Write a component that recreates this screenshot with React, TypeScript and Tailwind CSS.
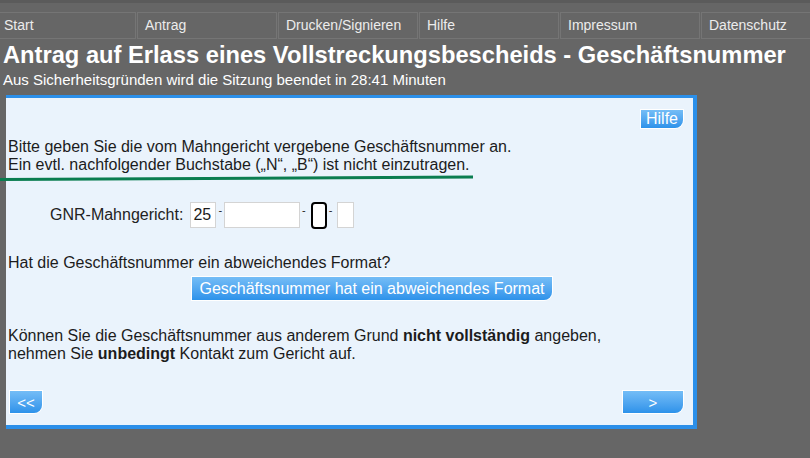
const navItems = ["Start", "Antrag", "Drucken/Signieren", "Hilfe", "Impressum", "Datenschutz"]

function BlueButton({ children, className }: { children: React.ReactNode; className: string }) {
    return (
        <button
            className={
                "flex items-center justify-center bg-gradient-to-b from-[#74bdf6] to-[#2c92ea] text-white leading-none rounded-br-[8px] shadow-[0_0_0_1px_#ffffff] " +
                className
            }
        >
            {children}
        </button>
    )
}

function Dash() {
    return <span className="self-start mt-[3px] mx-[2px] text-[11px] leading-none text-[#222]">-</span>
}

export default function App() {
    return (
        <div className="relative w-[810px] h-[458px] overflow-hidden bg-[#666666] font-['Liberation_Sans',Arial,sans-serif]">
            <div className="h-[3px] bg-[#5b5b5b]" />

            <nav className="flex gap-[1px] ml-[-4px] mt-[9px]">
                {navItems.map((item, index) => {
                    return (
                        <div key={index} className="w-[140px] h-[27px] shrink-0 border border-[#757575] pl-[7px] text-[14px] leading-[25px] text-[#ececec]">
                            {item}
                        </div>
                    )
                })}
            </nav>

            <header className="pl-[3px] text-white">
                <h1 className="text-[23.7px] font-bold leading-[30px] mt-[1px]">
                    Antrag auf Erlass eines Vollstreckungsbescheids - Geschäftsnummer
                </h1>
                <p className="text-[15px] leading-[20px]">
                    Aus Sicherheitsgründen wird die Sitzung beendet in 28:41 Minuten
                </p>
            </header>

            <main className="ml-[6px] mt-[5px] w-[691px] h-[334px] bg-[#eaf3fc] border-t-[3px] border-r-[4px] border-b-[4px] border-[#2b8fe9] text-[16px] text-[#1c1c1c]">
                <div className="flex justify-end pr-[10px] pt-[12px]">
                    <BlueButton className="w-[42px] h-[18px] text-[16px]">Hilfe</BlueButton>
                </div>

                <p className="pl-[2px] mt-[10px] leading-[18px]">
                    Bitte geben Sie die vom Mahngericht vergebene Geschäftsnummer an.
                    <br />
                    Ein evtl. nachfolgender Buchstabe („N“, „B“) ist nicht einzutragen.
                </p>

                <div className="flex items-center pl-[44px] mt-[28px] h-[26px]">
                    <span className="mr-[7px] text-[#222]">GNR-Mahngericht:</span>
                    <div className="w-[26px] h-[26px] bg-white border border-[#d4d4d4] pl-[2px] leading-[24px]">25</div>
                    <Dash />
                    <div className="w-[76px] h-[26px] bg-white border border-[#d4d4d4]" />
                    <Dash />
                    <div className="w-[16px] h-[27px] ml-[3px] bg-white border-2 border-black rounded-[4px]" />
                    <Dash />
                    <div className="w-[17px] h-[26px] ml-[3px] bg-white border border-[#d4d4d4]" />
                </div>

                <p className="pl-[2px] mt-[26px] leading-[18px]">Hat die Geschäftsnummer ein abweichendes Format?</p>

                <BlueButton className="ml-[186px] mt-[5px] w-[360px] h-[23px] text-[16px]">
                    Geschäftsnummer hat ein abweichendes Format
                </BlueButton>

                <p className="pl-[2px] mt-[27px] leading-[18px]">
                    Können Sie die Geschäftsnummer aus anderem Grund <b>nicht vollständig</b> angeben,
                    <br />
                    nehmen Sie <b>unbedingt</b> Kontakt zum Gericht auf.
                </p>

                <div className="flex justify-between pl-[4px] pr-[10px] mt-[28px]">
                    <BlueButton className="w-[32px] h-[22px] text-[15px]">&lt;&lt;</BlueButton>
                    <BlueButton className="w-[60px] h-[22px] text-[15px]">&gt;</BlueButton>
                </div>
            </main>

            <svg className="absolute left-0 top-[174px]" width="476" height="8">
                <line x1="0" y1="5.5" x2="473" y2="3" stroke="#0a7d50" strokeWidth="3" />
            </svg>
        </div>
    )
}
